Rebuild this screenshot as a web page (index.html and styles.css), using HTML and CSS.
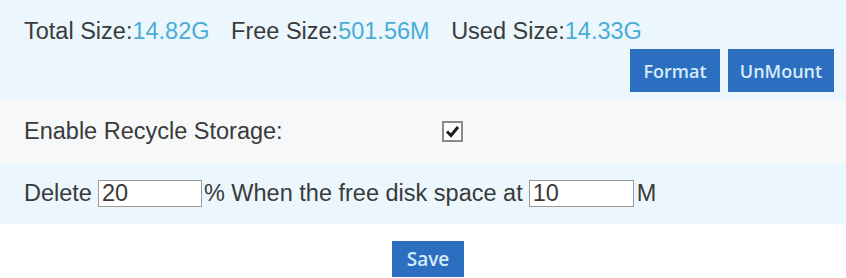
FILE: index.html
```html
<!DOCTYPE html>
<html>
<head>
<meta charset="utf-8">
<link rel="stylesheet" href="styles.css">
</head>
<body>
<div class="page">
  <section class="row info">
    <div class="sizes">
      <span class="item">Total Size:<span class="val">14.82G</span></span>
      <span class="item">Free Size:<span class="val">501.56M</span></span>
      <span class="item">Used Size:<span class="val">14.33G</span></span>
    </div>
    <div class="actions">
      <button class="btn btn-format">Format</button>
      <button class="btn btn-unmount">UnMount</button>
    </div>
  </section>
  <section class="row recycle">
    <span class="label">Enable Recycle Storage:</span>
    <span class="check">
      <svg width="21" height="21" viewBox="0 0 21 21">
        <rect x="1" y="1" width="19" height="19" fill="#fff" stroke="#8a8a8a" stroke-width="2"/>
        <path d="M5 10.5 L9 14.5 L16 6" fill="none" stroke="#1e1e1e" stroke-width="3"/>
      </svg>
    </span>
  </section>
  <section class="row delete">
    <span>Delete</span>
    <span class="field">20</span>
    <span>% When the free disk space at</span>
    <span class="field field2">10</span>
    <span>M</span>
  </section>
  <div class="save-row">
    <button class="btn btn-save">Save</button>
  </div>
</div>
</body>
</html>
```
FILE: styles.css
```css
html, body {
  margin: 0;
  padding: 0;
  background: #ffffff;
}
.page {
  width: 846px;
  font-family: "Liberation Sans", Arial, sans-serif;
  font-size: 23.5px;
  color: #3a3a3a;
}
.row {
  box-sizing: border-box;
  padding-left: 24px;
}
.info {
  background: #ebf7fd;
  height: 100px;
  padding-top: 17px;
  padding-right: 12px;
}
.sizes {
  line-height: 28px;
  white-space: nowrap;
}
.item {
  margin-right: 15px;
}
.val {
  color: #4aacd8;
}
.actions {
  display: flex;
  justify-content: flex-end;
  gap: 8px;
  margin-top: 4px;
}
.btn {
  font-family: "Open Sans", "DejaVu Sans", sans-serif;
  font-weight: 600;
  font-size: 18px;
  color: #d6ebfa;
  background: #2c6fc0;
  border: none;
  border-radius: 0;
  padding: 0;
  height: 43px;
  cursor: pointer;
}
.btn-format {
  width: 90px;
}
.btn-unmount {
  width: 106px;
}
.recycle {
  background: #f6f8f9;
  height: 63px;
  display: flex;
  align-items: center;
}
.label {
  width: 418px;
}
.check {
  display: flex;
}
.delete {
  background: #ebf7fd;
  height: 61px;
  display: flex;
  align-items: center;
  gap: 6px;
  white-space: nowrap;
}
.field {
  box-sizing: border-box;
  width: 104px;
  height: 27px;
  line-height: 25px;
  border: 1px solid #9a9a9a;
  background: #fff;
  padding-left: 3px;
  margin-right: -4px;
}
.field2 {
  width: 105px;
  margin-right: -3px;
}
.save-row {
  display: flex;
  justify-content: center;
  padding-left: 10px;
  padding-top: 17px;
}
.btn-save {
  width: 72px;
  height: 36px;
  font-size: 19px;
}
```
